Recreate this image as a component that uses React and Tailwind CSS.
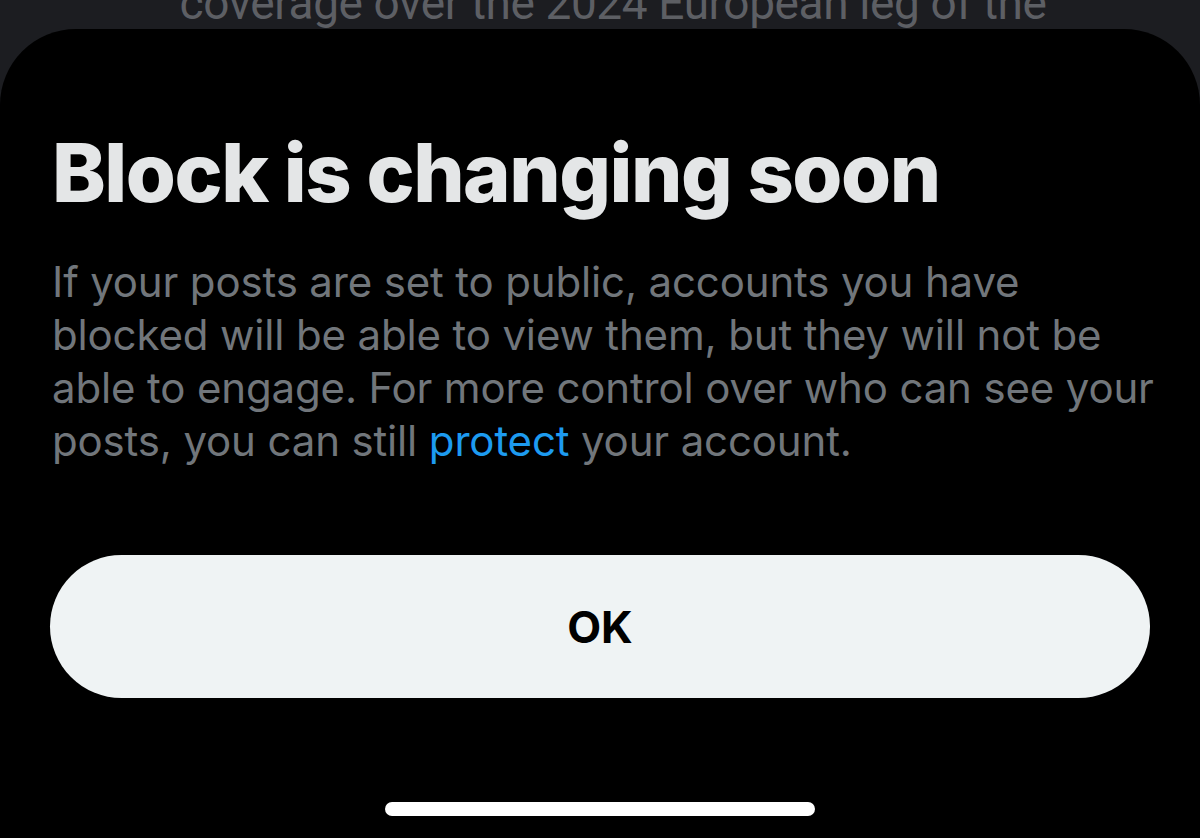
import React from 'react';

const App = () => {
  return (
    <div className="h-[838px] w-full bg-[#1c1d21] flex flex-col overflow-hidden select-none" style={{ fontFamily: 'Inter, "Noto Sans", sans-serif' }}>
      {/* timeline text behind the sheet, cut off at the top */}
      <div className="h-[29px] overflow-hidden flex justify-center pl-[26px]">
        <p className="text-[46px] leading-none -mt-[20px] text-[#5d5f64] whitespace-nowrap tracking-[-0.4px]" style={{ fontFamily: 'Roboto, sans-serif' }}>
          coverage over the 2024 European leg of the
        </p>
      </div>

      <div className="flex-1 bg-black rounded-t-[76px] flex flex-col px-[52px]">
        <h1 className="mt-[104px] text-[81px] leading-none font-extrabold text-[#e4e6e7] tracking-[-1.5px]">
          Block is changing soon
        </h1>
        <p className="mt-[41px] text-[42px] leading-[53px] text-[#71767b] whitespace-nowrap tracking-[-0.15px]">
          If your posts are set to public, accounts you have<br />
          blocked will be able to view them, but they will not be<br />
          able to engage. For more control over who can see your<br />
          posts, you can still <span className="text-[#1d9bf0]">protect</span> your account.
        </p>

        <button className="mt-[88px] -mx-[2px] h-[143px] rounded-full bg-[#eff3f4] text-black text-[44px] font-bold">
          OK
        </button>

        <div className="mt-auto mb-[22px] self-center w-[430px] h-[14px] rounded-full bg-white" />
      </div>
    </div>
  );
};

export default App;
